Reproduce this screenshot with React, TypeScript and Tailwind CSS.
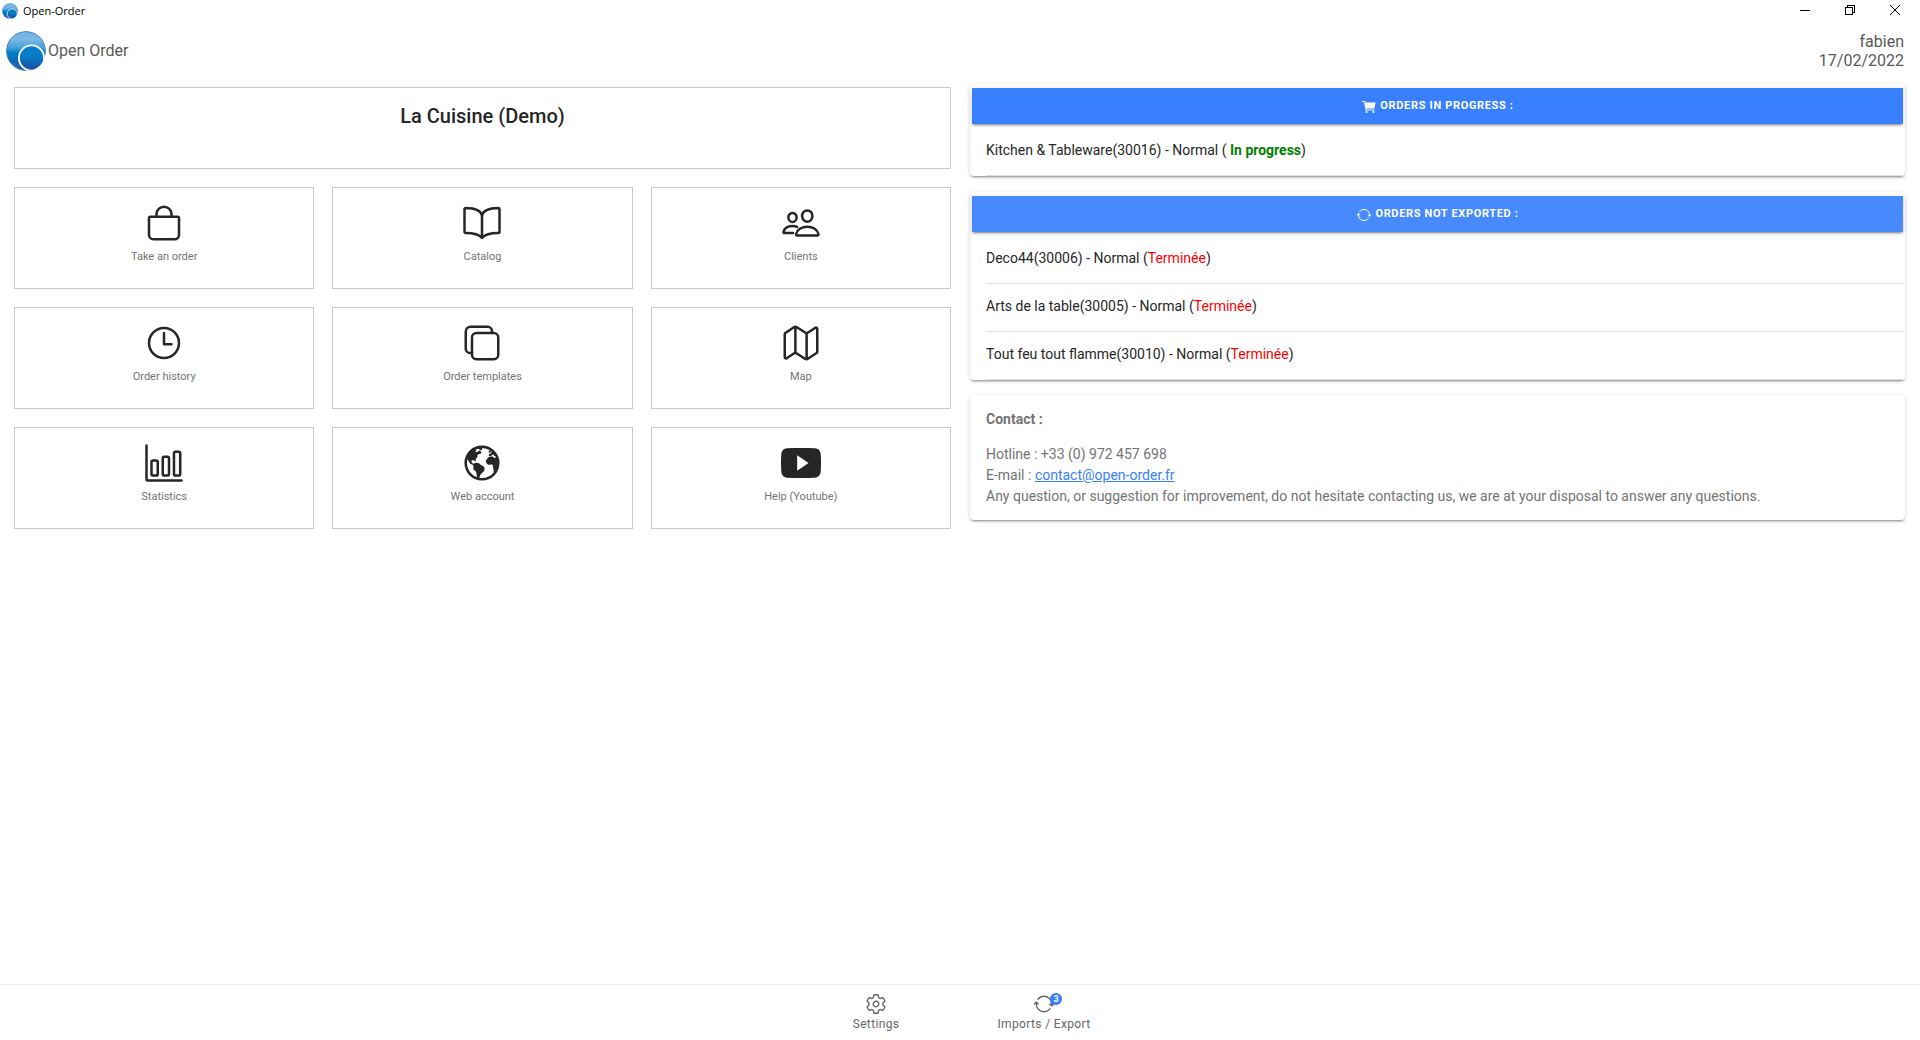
import React from "react";
import {
  IoBagOutline,
  IoBookOutline,
  IoPeopleOutline,
  IoTimeOutline,
  IoCopyOutline,
  IoMapOutline,
  IoBarChartOutline,
  IoEarth,
  IoLogoYoutube,
  IoCartSharp,
  IoSyncOutline,
  IoSettingsOutline,
} from "react-icons/io5";

function Logo({ className, id }: { className: string; id: string }) {
  return (
    <svg viewBox="0 0 40 40" className={className} aria-hidden="true">
      <defs>
        <linearGradient id={`${id}-ball`} x1="0" y1="0" x2="0" y2="1">
          <stop offset="0" stopColor="#6fb0e0" />
          <stop offset="0.2" stopColor="#7ab8e5" />
          <stop offset="0.4" stopColor="#4ba3dc" />
          <stop offset="0.54" stopColor="#0080c6" />
          <stop offset="0.75" stopColor="#0f69b4" />
          <stop offset="1" stopColor="#2a5fae" />
        </linearGradient>
        <linearGradient id={`${id}-core`} x1="0" y1="0" x2="0" y2="1">
          <stop offset="0" stopColor="#0a7cc6" />
          <stop offset="0.35" stopColor="#0581c9" />
          <stop offset="1" stopColor="#1a4ba3" />
        </linearGradient>
        <clipPath id={`${id}-clip`}>
          <circle cx="20" cy="20" r="20" />
        </clipPath>
      </defs>
      <g clipPath={`url(#${id}-clip)`}>
        <circle cx="20" cy="20" r="19.5" fill={`url(#${id}-ball)`} stroke="#3f7fbf" strokeWidth="1" />
        <circle cx="25.5" cy="27" r="12.6" fill={`url(#${id}-core)`} stroke="#fff" strokeWidth="1.8" />
      </g>
    </svg>
  );
}

const tiles = [
  { label: "Take an order", Icon: IoBagOutline },
  { label: "Catalog", Icon: IoBookOutline },
  { label: "Clients", Icon: IoPeopleOutline },
  { label: "Order history", Icon: IoTimeOutline },
  { label: "Order templates", Icon: IoCopyOutline },
  { label: "Map", Icon: IoMapOutline },
  { label: "Statistics", Icon: IoBarChartOutline },
  { label: "Web account", Icon: IoEarth },
  { label: "Help (Youtube)", Icon: IoLogoYoutube },
];

const pending = ["Deco44(30006)", "Arts de la table(30005)", "Tout feu tout flamme(30010)"];

const cardClass =
  "rounded-sm bg-white shadow-[0_3px_1px_-2px_rgba(0,0,0,0.2),0_2px_2px_0_rgba(0,0,0,0.14),0_1px_5px_0_rgba(0,0,0,0.12)]";
const barClass =
  "flex h-9 w-full items-center justify-center gap-[3px] rounded-none pt-px text-[11px] font-bold uppercase tracking-[0.06em] text-white shadow-[0_3px_1px_-2px_rgba(0,0,0,0.2),0_2px_2px_0_rgba(0,0,0,0.14),0_1px_5px_0_rgba(0,0,0,0.12)]";

function TitleBar() {
  return (
    <div className="flex h-6 items-start justify-between pl-0.5 text-black">
      <div className="flex h-[22px] items-center gap-[5px]">
        <Logo className="size-4" id="small" />
        <span className="font-['Open_Sans',sans-serif] text-[11px] leading-4">Open-Order</span>
      </div>
      <div className="flex h-5 items-center pr-[3px]">
        <button aria-label="Minimize" className="flex w-[45px] justify-center">
          <svg viewBox="0 0 10 10" className="size-2.5" shapeRendering="crispEdges">
            <path d="M0 5.5h10" stroke="currentColor" />
          </svg>
        </button>
        <button aria-label="Restore" className="flex w-[45px] justify-center">
          <svg viewBox="0 0 10 10" className="size-2.5" fill="none" stroke="currentColor" shapeRendering="crispEdges">
            <path d="M.5 2.5h7v7h-7zM2.5 2.5v-2h7v7h-2" />
          </svg>
        </button>
        <button aria-label="Close" className="flex w-[45px] justify-center">
          <svg viewBox="0 0 10 10" className="size-2.5" stroke="currentColor">
            <path d="M0 0l10 10M10 0L0 10" />
          </svg>
        </button>
      </div>
    </div>
  );
}

export default function App() {
  return (
    <div className="flex min-h-screen flex-col bg-white font-['Roboto',sans-serif] text-[#262626]">
      <TitleBar />
      <header className="flex h-14 items-center justify-between pl-1.5 pr-4 pb-0.5 text-base text-[#595959]">
        <div className="flex items-center gap-0.5">
          <Logo className="size-10" id="large" />
          <span>Open Order</span>
        </div>
        <div className="text-right leading-[19px]">
          <p>fabien</p>
          <p>17/02/2022</p>
        </div>
      </header>

      <main className="grid flex-1 grid-cols-2 items-start">
        <section className="flex flex-col gap-[18px] pt-[7px] pr-[9px] pl-3.5">
          <div className="h-[82px] border border-[#c8c8c8] pt-4 text-center">
            <h1 className="text-xl leading-6 font-medium">La Cuisine (Demo)</h1>
          </div>
          <div className="grid grid-cols-3 gap-[18px]">
            {tiles.map(({ label, Icon }) => (
              <button
                key={label}
                className="flex h-[102px] flex-col items-center border border-[#c8c8c8] pt-[15px]"
              >
                <Icon className="size-10" />
                <span className="mt-1.5 text-[11px] leading-4 text-[#737373]">{label}</span>
              </button>
            ))}
          </div>
        </section>

        <section className="flex flex-col pt-1 pr-[15px] pl-2.5">
          <div className={`${cardClass} mb-4 px-0.5 pt-1`}>
            <button className={`${barClass} bg-[#3880ff]`}>
              <IoCartSharp className="size-4" />
              Orders in progress :
            </button>
            <p className="ml-3.5 mt-1 -mr-0.5 flex h-12 items-center border-b border-[#dedede] pb-1 text-sm whitespace-pre">
              Kitchen &amp; Tableware(30016) - Normal ( <b className="text-[#008000]">In progress</b>)
            </p>
          </div>

          <div className={`${cardClass} mb-[15px] px-0.5 pt-1`}>
            <button className={`${barClass} bg-[#478aff]`}>
              <IoSyncOutline className="size-4" />
              Orders not exported :
            </button>
            <ul className="ml-3.5 mt-1 -mr-0.5 text-sm">
              {pending.map((name) => (
                <li key={name} className="flex h-12 items-center border-b border-[#dedede] pb-1">
                  {name} - Normal (<span className="text-[#ff0000]">Terminée</span>)
                </li>
              ))}
            </ul>
          </div>

          <div className={`${cardClass} px-4 pt-3.5 pb-[13px] text-sm leading-[21px] text-[#737373]`}>
            <p className="mb-3.5 font-bold">Contact :</p>
            <p>Hotline : +33 (0) 972 457 698</p>
            <p>
              E-mail :{" "}
              <a href="mailto:contact@open-order.fr" className="text-[#3880ff] underline">
                contact@open-order.fr
              </a>
            </p>
            <p>
              Any question, or suggestion for improvement, do not hesitate contacting us, we are at your disposal to
              answer any questions.
            </p>
          </div>
        </section>
      </main>

      <footer className="flex h-14 items-center justify-center border-t border-[#ececec] text-xs tracking-[0.03em] text-[#666666]">
        <button className="flex w-[168px] flex-col items-center gap-px">
          <IoSettingsOutline className="size-[22px]" />
          <span className="leading-4">Settings</span>
        </button>
        <button className="flex w-[168px] flex-col items-center gap-px">
          <span className="relative">
            <IoSyncOutline className="size-[22px]" />
            <span className="absolute top-0 left-[17px] flex size-3 items-center justify-center rounded-full bg-[#3880ff] text-[9px] leading-3 font-bold tracking-normal text-white">
              3
            </span>
          </span>
          <span className="leading-4">Imports / Export</span>
        </button>
      </footer>
    </div>
  );
}
